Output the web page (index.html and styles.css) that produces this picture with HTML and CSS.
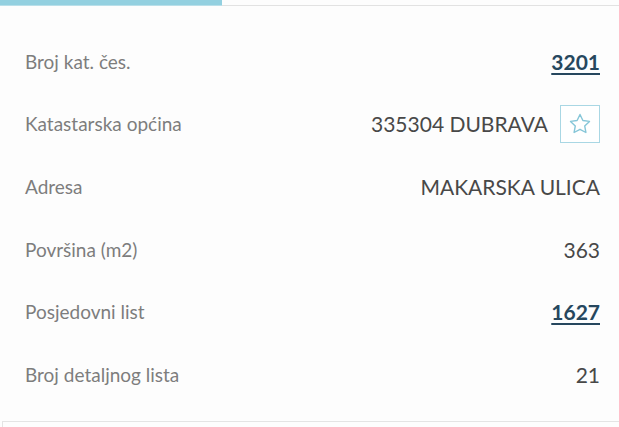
FILE: index.html
```html
<!DOCTYPE html>
<html lang="hr">
<head>
    <meta charset="UTF-8">
    <meta name="viewport" content="width=device-width, initial-scale=1.0">
    <title>Čestica 3201</title>
    <link rel="stylesheet" href="styles.css">
</head>
<body>
    <div class="tabs">
        <div class="tab active"></div>
        <div class="tab"></div>
    </div>

    <div class="details">
        <div class="row">
            <span class="label">Broj kat. čes.</span>
            <a class="value link" href="#">3201</a>
        </div>
        <div class="row">
            <span class="label">Katastarska općina</span>
            <span class="value">
                335304 DUBRAVA
                <button class="fav" title="Dodaj u favorite">
                    <svg width="24" height="24" viewBox="0 0 24 24" fill="none" stroke="currentColor" stroke-width="1.4" stroke-linejoin="round">
                        <path d="M12 2.5l2.9 6 6.6.9-4.8 4.5 1.2 6.6L12 17.3l-5.9 3.2 1.2-6.6-4.8-4.5 6.6-.9z"/>
                    </svg>
                </button>
            </span>
        </div>
        <div class="row">
            <span class="label">Adresa</span>
            <span class="value">MAKARSKA ULICA</span>
        </div>
        <div class="row">
            <span class="label">Površina (m2)</span>
            <span class="value">363</span>
        </div>
        <div class="row">
            <span class="label">Posjedovni list</span>
            <a class="value link" href="#">1627</a>
        </div>
        <div class="row">
            <span class="label">Broj detaljnog lista</span>
            <span class="value">21</span>
        </div>
    </div>

    <div class="next-card"></div>
</body>
</html>
```
FILE: styles.css
```css
body { margin: 0; background-color: #fdfdfd; font-family: Lato, 'Open Sans', sans-serif; overflow: hidden; }

.tabs { display: flex; height: 6px; }
.tab { flex: 1; border-bottom: 1px solid #e2e2e2; }
.tab.active { flex: 0 0 222px; background-color: #93d0e0; border-bottom: 1px solid #b9dfe9; }

.details { padding: 24px 19px 0 25px; }
.row { display: flex; justify-content: space-between; align-items: center; height: 62.6px; }
.label { color: #7d7d7d; font-size: 19px; }
.value { color: #484848; font-size: 21px; display: flex; align-items: center; gap: 12px; }
.link { color: #26475e; font-weight: bold; text-decoration: underline; text-decoration-thickness: 2px; text-underline-offset: 3px; }

.fav { width: 40px; height: 38px; padding: 0; border: 1px solid #a9d7e4; background: #fff; color: #86c6d8; display: flex; align-items: center; justify-content: center; cursor: pointer; }

.next-card { margin: 15px 0 0 2px; height: 6px; border: 1px solid #e4e4e4; border-right: none; border-bottom: none; }
```
